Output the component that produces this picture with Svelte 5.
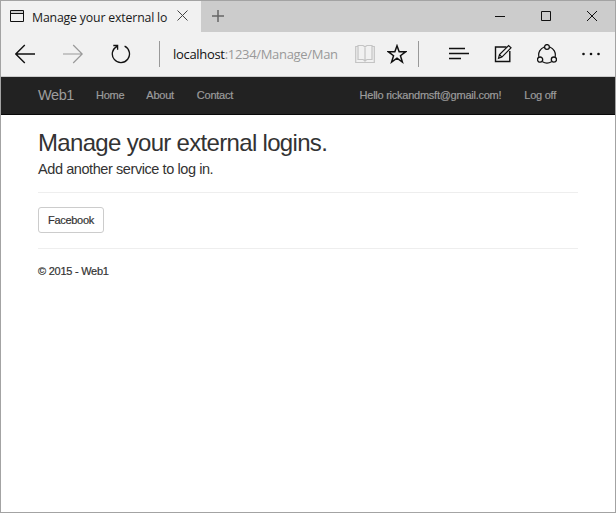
<script>
  const links = [
    { label: 'Home', left: 0 },
    { label: 'About', left: 22 },
    { label: 'Contact', left: 23 }
  ];
</script>

<div class="window">
  <header class="titlebar">
    <div class="tab">
      <svg class="page" width="14" height="12" viewBox="0 0 14 12"><path d="M.5 .5h13v11H.5zM.5 3.5h13" /><path d="M1 2h12" stroke="#aaa" /></svg>
      <span class="tab-title">Manage your external lo</span>
      <svg class="tab-close" width="11" height="11" viewBox="0 0 11 11"><path d="M.5 .5l10 10M10.5 .5l-10 10" /></svg>
    </div>
    <svg class="plus" width="12" height="12" viewBox="0 0 12 12"><path d="M6 0v12M0 6h12" /></svg>
    <div class="controls">
      <svg width="10" height="10" viewBox="0 0 10 10"><path d="M0 5.5h10" /></svg>
      <svg width="10" height="10" viewBox="0 0 10 10"><path d="M.5 .5h9v9h-9z" /></svg>
      <svg width="10" height="10" viewBox="0 0 10 10"><path d="M0 0l10 10M10 0L0 10" /></svg>
    </div>
  </header>

  <div class="toolbar">
    <svg width="20" height="20" viewBox="0 0 20 20" style:margin-left="14px"><path d="M20 10H1M9.8 1L.8 10l9 9" stroke-width="1.4" /></svg>
    <svg width="20" height="20" viewBox="0 0 20 20" style:margin-left="28px"><path d="M0 10h19M10.200 1l9 9-9 9" stroke="#999" stroke-width="1.2" /></svg>
    <svg width="20" height="20" viewBox="0 0 20 20" style:margin-left="28px"><path d="M13.600 2.200A8.600 8.600 0 1 1 6 2.300M2.300 1.500H6.600V5.800" stroke-width="1.300" /></svg>
    <i class="divider" style:margin-left="28px"></i>
    <span class="url">localhost<em>:1234/Manage/Man</em></span>
    <svg width="20" height="20" viewBox="0 0 20 20" style:margin-left="13px"><path d="M3 2.500H.7V18.500H19.300V2.500H17M3 1.500h5l2 1.300 2-1.300h5v14h-5l-2 1.200-2-1.200H3zM10 2.800V18" stroke="#c4c4c4" stroke-width="1.200" /></svg>
    <svg width="20" height="20" viewBox="0 0 20 20" style:margin-left="12px"><path d="M10 1.800l2.150 6h6.400l-5.100 3.900 1.950 6.300L10 14.200 4.600 18l1.950-6.300L1.450 7.800h6.400z" stroke-width="1.500" /></svg>
    <i class="divider" style:margin-left="11px"></i>
    <svg width="20" height="20" viewBox="0 0 20 20" style:margin-left="30px"><path d="M0 4.500h16M0 9.500h20M0 14.500h12" stroke-width="1.300" /></svg>
    <svg width="20" height="20" viewBox="0 0 20 20" style:margin-left="25px"><path d="M12.500 3H1.500v14.500h14.300V7" stroke-width="1.400" /><path d="M4.500 14.300l1-3.700L14.600 1.500l2.400 2.300-9.100 9.300zM5.500 10.600l2.400 2.500" stroke-width="1.200" /></svg>
    <svg width="20" height="20" viewBox="0 0 20 20" style:margin-left="23px"><path d="M7.200 3A8.400 8.400 0 0 0 1.900 12.800M12.800 3A8.400 8.400 0 0 1 18.100 12.800M5.500 17.800A8.800 8.800 0 0 0 14.500 17.800" stroke-width="1.200" /><g stroke-width="1.300"><circle cx="10" cy="3" r="2.400" /><circle cx="3.100" cy="15.600" r="2.600" /><circle cx="16.900" cy="15.600" r="2.600" /></g></svg>
    <svg width="20" height="20" viewBox="0 0 20 20" style:margin-left="24px"><g fill="#111" stroke="none"><circle cx="2.500" cy="10" r="1.300" /><circle cx="10" cy="10" r="1.300" /><circle cx="17.500" cy="10" r="1.300" /></g></svg>
  </div>

  <nav>
    <span class="brand">Web1</span>
    {#each links as link}
      <span style:margin-left="{link.left}px">{link.label}</span>
    {/each}
    <span class="hello">Hello rickandmsft@gmail.com!</span>
    <span class="logoff">Log off</span>
  </nav>

  <main>
    <h2>Manage your external logins.</h2>
    <h4>Add another service to log in.</h4>
    <hr />
    <button>Facebook</button>
    <hr />
    <footer>© 2015 - Web1</footer>
  </main>
</div>

<style>
  .window {
    box-sizing: border-box;
    width: 616px;
    height: 513px;
    border: 1px solid #a3a3a3;
    background: #fff;
    overflow: hidden;
    font-family: 'Liberation Sans', Arial, sans-serif;
    white-space: nowrap;
  }
  svg {
    display: block;
    flex: none;
    fill: none;
    stroke: #111;
  }
  .titlebar {
    display: flex;
    height: 31px;
    background: #ccc;
  }
  .tab {
    display: flex;
    width: 200px;
    background: #f1f1f1;
  }
  .page {
    margin: 9px 0 0 9px;
  }
  .tab-title {
    width: 137px;
    margin: 8px 0 0 8px;
    font: 12.3px/18px 'Open Sans', sans-serif;
    letter-spacing: -0.17px;
    color: #1a1a1a;
  }
  .tab-close {
    margin: 9px 0 0 8px;
    stroke: #444;
  }
  .plus {
    margin: 9px 0 0 11px;
    stroke: #666;
    stroke-width: 1.5;
  }
  .controls {
    display: flex;
    gap: 36px;
    margin: 10px 18px 0 auto;
  }
  .toolbar {
    display: flex;
    align-items: center;
    box-sizing: border-box;
    height: 45px;
    padding-bottom: 1px;
    border-bottom: 1px solid #ccc;
    background: #f1f1f1;
  }
  .divider {
    flex: none;
    width: 1px;
    height: 26px;
    background: #999;
  }
  .url {
    width: 169px;
    margin-left: 13px;
    font: 13px/20px 'Open Sans', sans-serif;
    letter-spacing: -0.31px;
    color: #111;
  }
  .url em {
    font-style: normal;
    color: #999;
  }
  nav {
    display: flex;
    box-sizing: border-box;
    height: 38px;
    padding-left: 37px;
    border-bottom: 1px solid #080808;
    background: #222;
    color: #9d9d9d;
    font-size: 11px;
    letter-spacing: -0.25px;
    line-height: 37px;
    -webkit-text-stroke: 0.2px;
  }
  .brand {
    width: 58px;
    font-size: 14.5px;
    letter-spacing: -0.4px;
    -webkit-text-stroke: 0;
  }
  .hello {
    margin-left: auto;
  }
  .logoff {
    margin: 0 59px 0 23px;
  }
  main {
    padding: 14px 37px 0;
    color: #333;
  }
  h2 {
    margin: 0;
    font-size: 24px;
    letter-spacing: -0.68px;
    line-height: 27px;
    font-weight: 400;
  }
  h4 {
    margin: 4px 0 0;
    font-size: 14.5px;
    letter-spacing: -0.42px;
    line-height: 18px;
    font-weight: 400;
  }
  hr {
    height: 1px;
    margin: 14px 0;
    border: 0;
    background: #eee;
  }
  button {
    display: block;
    width: 66px;
    height: 26px;
    margin-bottom: 15px;
    padding: 0;
    border: 1px solid #ccc;
    border-radius: 3px;
    background: #fff;
    color: #333;
    font: 11px 'Liberation Sans', sans-serif;
    letter-spacing: -0.3px;
    -webkit-text-stroke: 0.2px;
  }
  footer {
    font-size: 11px;
    letter-spacing: -0.25px;
    line-height: 16px;
    -webkit-text-stroke: 0.2px;
  }
</style>
